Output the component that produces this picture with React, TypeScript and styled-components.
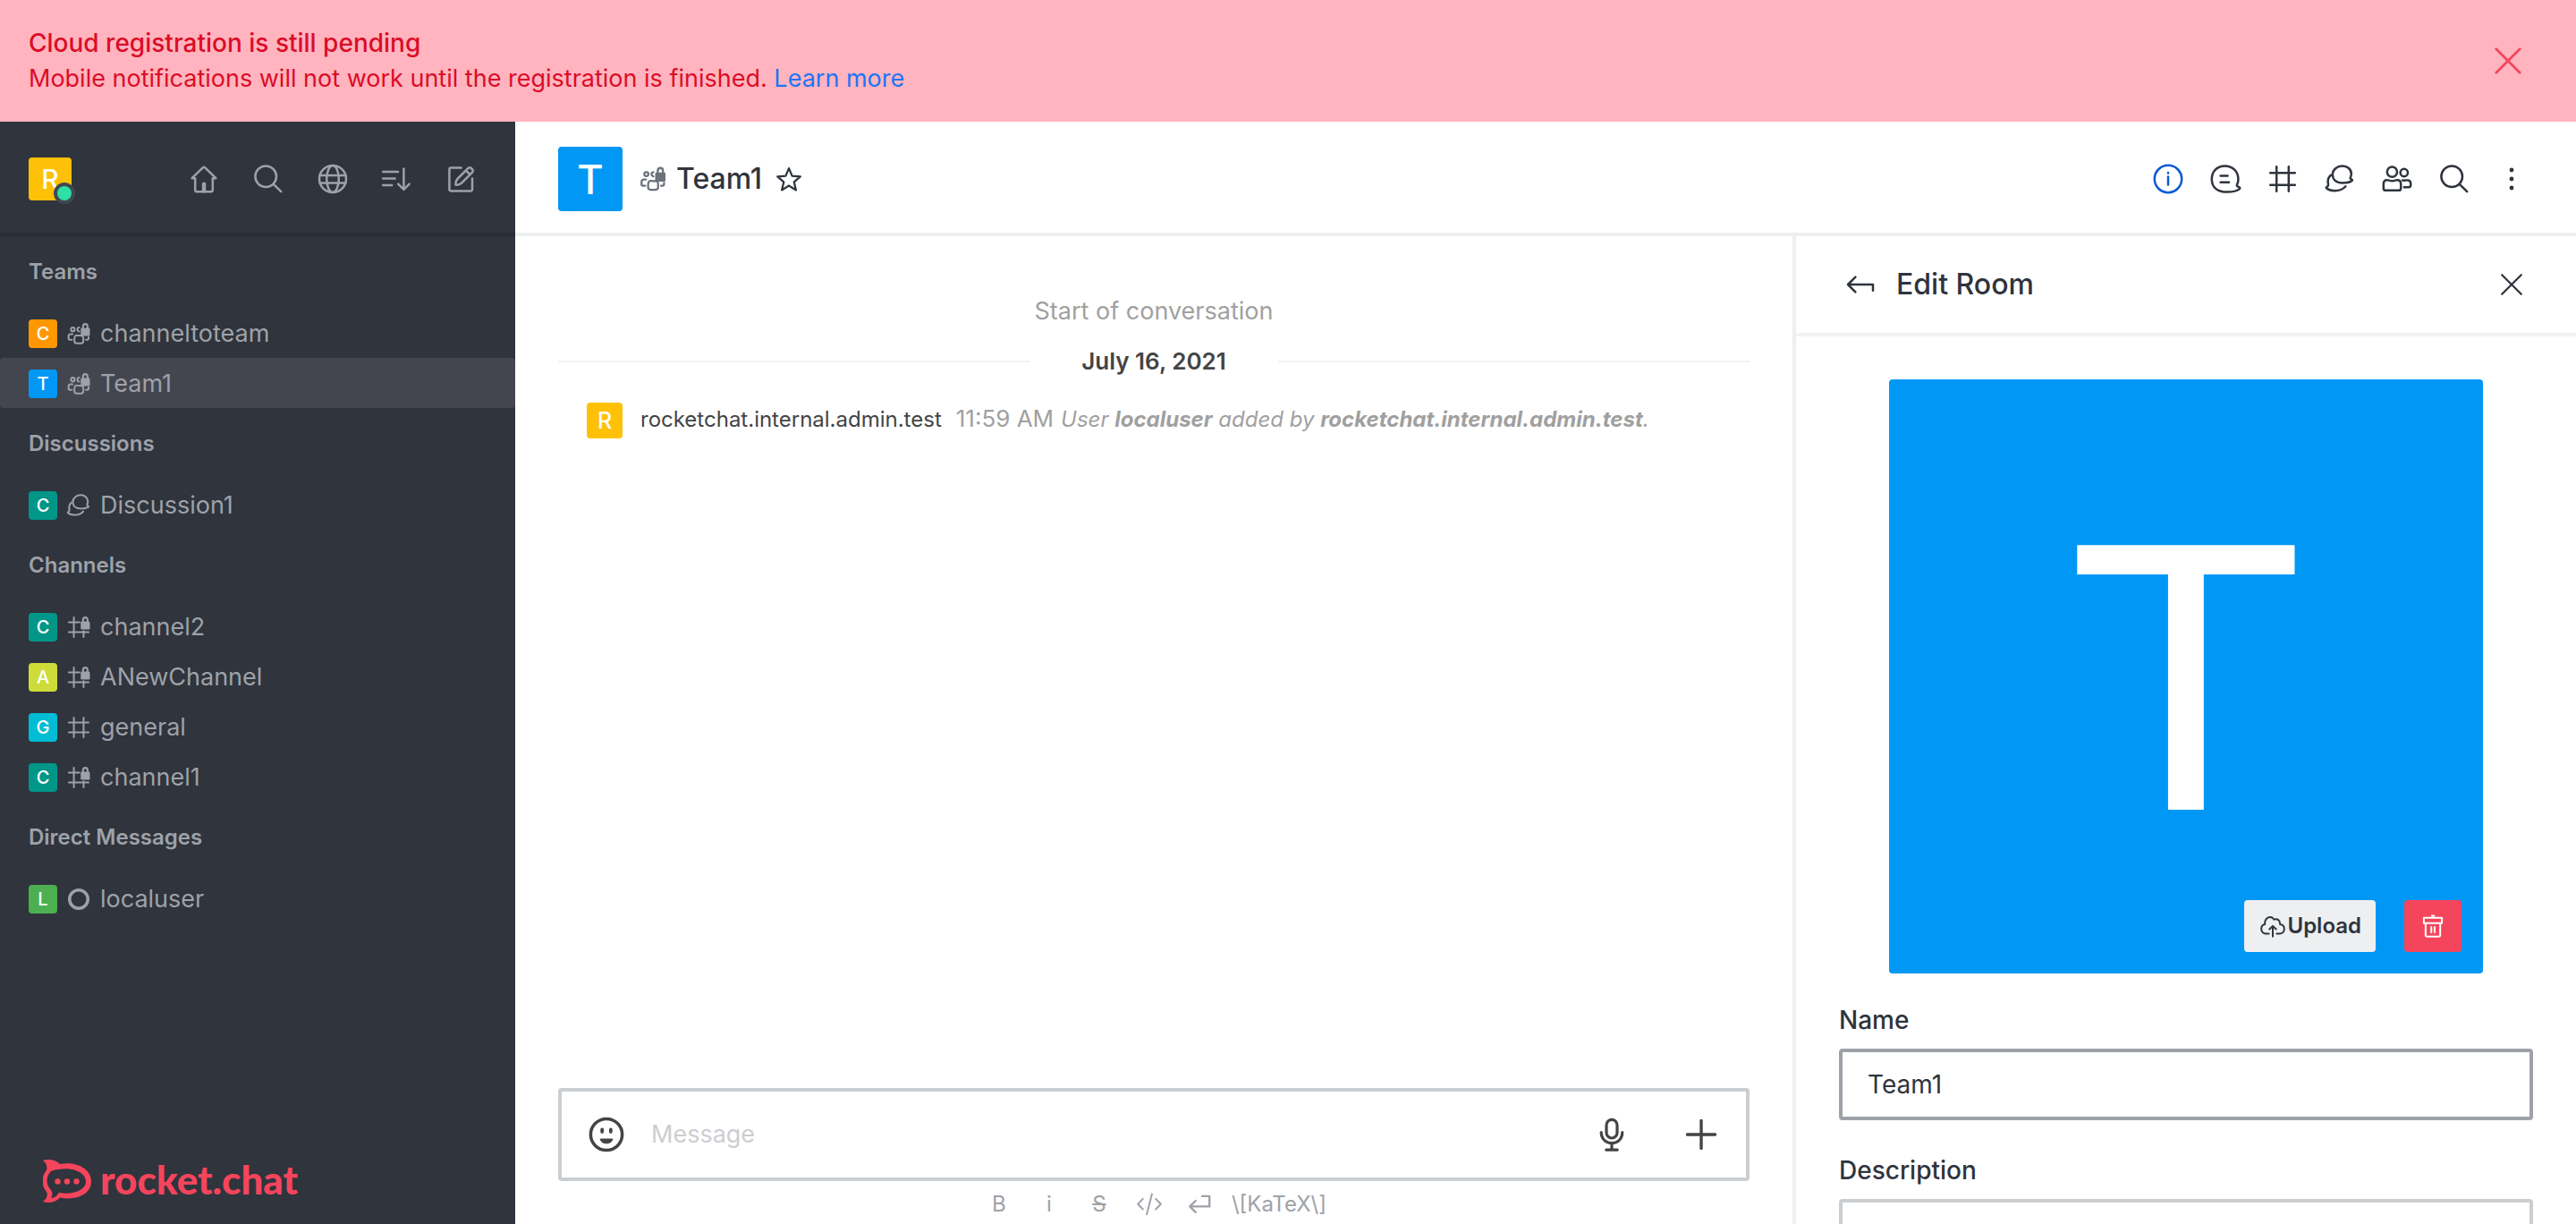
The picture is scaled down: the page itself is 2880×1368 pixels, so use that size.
import React from 'react';
import styled, { createGlobalStyle } from 'styled-components';

const Global = createGlobalStyle`
  * { box-sizing: border-box; }
  html, body, #root { height: 100%; margin: 0; }
  body {
    font-family: Inter, 'Liberation Sans', sans-serif;
    font-size: 27px;
    line-height: 40px;
    color: #2f343d;
    background: #fff;
    overflow: hidden;
  }
  button { border: 0; padding: 0; background: none; font: inherit; color: inherit; cursor: pointer; }
  h1, h2, h3, p, ul { margin: 0; padding: 0; font: inherit; list-style: none; }
`;

const Page = styled.div`
  height: 100vh;
  display: flex;
  flex-direction: column;
`;

const Banner = styled.div`
  display: flex;
  align-items: center;
  justify-content: space-between;
  padding: 28px 54px 28px 32px;
  background: #ffb4bf;
  color: #db0c27;
`;
const BannerTitle = styled.h2` && { font-size: 28px; font-weight: 500; } `;
const BannerLink = styled.a` color: #1d74f5; text-decoration: none; `;
const BannerClose = styled.button` display: flex; color: #f5455c; `;

const Body = styled.div` flex: 1; min-height: 0; display: flex; `;

const Sidebar = styled.nav`
  width: 576px;
  flex: none;
  display: flex;
  flex-direction: column;
  background: #2f343d;
  color: #9ea2a8;
`;
const SidebarTop = styled.div`
  display: flex;
  align-items: center;
  justify-content: space-between;
  height: 128px;
  padding: 4px 32px 0;
  border-bottom: 4px solid #292c36;
`;
const SidebarActions = styled.div` display: flex; gap: 16px; `;
const IconButton = styled.button<{ $size: number; $color?: string }>`
  display: flex;
  align-items: center;
  justify-content: center;
  width: ${p => p.$size}px;
  height: ${p => p.$size}px;
  color: ${p => p.$color || 'inherit'};
`;

const Avatar = styled.span<{ $size: number; $font: number; $bg: string }>`
  position: relative;
  flex: none;
  display: flex;
  align-items: center;
  justify-content: center;
  width: ${p => p.$size}px;
  height: ${p => p.$size}px;
  border-radius: 4px;
  background: ${p => p.$bg};
  color: #fff;
  font-size: ${p => p.$font}px;
  font-weight: 500;
  line-height: 1;
`;
const Presence = styled.span`
  position: absolute;
  right: -4px;
  bottom: -4px;
  width: 24px;
  height: 24px;
  border: 4px solid #414852;
  border-radius: 50%;
  background: #2de0a5;
`;

const GroupTitle = styled.h3`
  && {
    padding: 20px 32px;
    font-size: 24px;
    line-height: 40px;
    font-weight: 600;
  }
`;
const Rooms = styled.div` flex: 1; `;
const RoomLink = styled.a<{ $active?: boolean }>`
  display: flex;
  align-items: center;
  gap: 8px;
  height: 56px;
  padding: 2px 32px 0;
  border-radius: 4px;
  background: ${p => (p.$active ? '#43464f' : 'transparent')};
  color: inherit;
  text-decoration: none;
`;
const Logo = styled.div`
  display: flex;
  align-items: flex-start;
  gap: 10px;
  padding: 0 48px 24px;
  color: #f5455c;
  font: 900 44px/44px Lato, sans-serif;
`;

const Main = styled.main` flex: 1; min-width: 0; display: flex; flex-direction: column; `;
const RoomHeader = styled.header`
  display: flex;
  align-items: center;
  height: 128px;
  padding: 4px 48px 0;
  border-bottom: 4px solid #eeeff1;
`;
const RoomTitle = styled.h1`
  && {
    flex: 1;
    display: flex;
    align-items: center;
    gap: 8px;
    padding-left: 16px;
    font-size: 32px;
    font-weight: 500;
  }
`;
const RoomKind = styled.span` display: flex; color: #6c727a; `;
const Toolbar = styled.div` display: flex; gap: 16px; `;

const Columns = styled.div` flex: 1; min-height: 0; display: flex; `;
const Conversation = styled.section`
  flex: 1;
  min-width: 0;
  display: flex;
  flex-direction: column;
  padding: 64px 48px 0;
`;
const Start = styled.p` && { text-align: center; color: #a0a0a0; } `;
const DateDivider = styled.div`
  display: flex;
  align-items: center;
  gap: 58px;
  padding: 16px 0;
  font-size: 26px;
  font-weight: 600;
  color: #444;
  &::before, &::after { content: ''; flex: 1; height: 2px; background: #f2f3f5; }
`;
const Message = styled.article`
  flex: 1;
  display: flex;
  align-items: flex-start;
  padding: 10px 32px;
`;
const MessageText = styled.p`
  && { flex: 1; padding-left: 20px; font-size: 24px; line-height: 36px; color: #a0a0a0; }
`;
const Author = styled.span` color: #444; margin-right: 12px; `;
const Time = styled.time` margin: 0 8px 0 4px; font-size: 26px; `;

const Composer = styled.form`
  display: flex;
  align-items: center;
  height: 104px;
  padding: 0 28px;
  border: 4px solid #cbced1;
  border-radius: 4px;
  color: #444;
`;
const ComposerInput = styled.input`
  flex: 1;
  min-width: 0;
  padding: 0 28px;
  border: 0;
  outline: 0;
  font: inherit;
  color: inherit;
  &::placeholder { color: #cbced1; opacity: 1; }
`;
const ComposerActions = styled.div` display: flex; gap: 56px; `;
const Formatting = styled.div`
  display: flex;
  justify-content: center;
  align-items: center;
  height: 48px;
  padding: 4px 8px 0 0;
  color: #9ea2a8;
  font-size: 24px;
`;
const FormatButton = styled.button`
  display: flex;
  align-items: center;
  justify-content: center;
  width: 56px;
  height: 40px;
`;
const Katex = styled.span` padding-left: 8px; `;

const Panel = styled.aside`
  width: 876px;
  flex: none;
  border-left: 4px solid #eeeff1;
  overflow: hidden;
`;
const PanelHeader = styled.header`
  display: flex;
  align-items: center;
  gap: 16px;
  height: 112px;
  padding: 0 48px;
  border-bottom: 4px solid #f2f3f5;
`;
const PanelTitle = styled.h2` && { flex: 1; font-size: 32px; font-weight: 500; } `;
const PanelBody = styled.form` padding: 48px; `;
const RoomPicture = styled.div`
  display: grid;
  aspect-ratio: 1;
  margin: 0 56px 32px;
  border-radius: 4px;
  background: #0198f5;
`;
const PictureLetter = styled.span`
  grid-area: 1 / 1;
  place-self: center;
  color: #fff;
  font: 430px/1 'Liberation Sans', Arial, sans-serif;
`;
const PictureActions = styled.div`
  grid-area: 1 / 1;
  place-self: end;
  display: flex;
  gap: 32px;
  padding: 24px;
`;
const PictureButton = styled.button<{ $danger?: boolean }>`
  display: flex;
  align-items: center;
  justify-content: center;
  min-width: 64px;
  height: 58px;
  padding: 0 16px;
  border-radius: 4px;
  background: ${p => (p.$danger ? '#f5455c' : '#eeeff1')};
  color: ${p => (p.$danger ? '#fff' : '#2f343d')};
  font-size: 24px;
  font-weight: 600;
`;
const Field = styled.div`
  display: flex;
  flex-direction: column;
  gap: 12px;
  padding-bottom: 36px;
  font-size: 28px;
`;
const Label = styled.label` font-weight: 500; `;
const TextInput = styled.input`
  height: 80px;
  padding: 0 28px;
  border: 4px solid #9ea2a8;
  border-radius: 4px;
  font: inherit;
  color: inherit;
  outline: 0;
`;
const TextArea = styled.textarea`
  height: 160px;
  padding: 16px 28px;
  border: 4px solid #cbced1;
  border-radius: 4px;
  font: inherit;
  resize: none;
`;

/* Icons share a 20-unit grid and draw with the current text colour. */
const ICONS: Record<string, React.ReactNode> = {
  home: <><path d="M3.300 9.600 9.400 3.700q.6-.5 1.200 0l6.100 5.900h-1.800v6.600q0 .9-.9.900H6q-.9 0-.9-.9V9.600z" /><path d="M10 12.800v3.800" strokeWidth="2.200" /></>,
  search: <><circle cx="8.600" cy="8.600" r="5.900" /><path d="m12.900 12.900 4.200 4.200" /></>,
  globe: <><circle cx="10" cy="10" r="7.500" /><ellipse cx="10" cy="10" rx="3.400" ry="7.500" /><path d="M2.800 8h14.400M2.800 12.200h14.400" /></>,
  sort: <path d="M2.100 6h8.400M2.100 9.800h6.700M2.100 13.500h5M13.700 4.200v11.600M10.600 12.800l3.100 3.100 3.100-3.100" />,
  edit: <path d="M9.800 3.800H4.100q-.9 0-.9.900v11.100q0 .9.900.9h11q.9 0 .9-.9V9.800M6.700 13.300c-.1-1.600.2-2.500 1-3.300l5.900-5.900c.6-.6 1.300-.6 1.900 0l.4.400c.6.6.6 1.300 0 1.900L10 12.300c-.8.8-1.700 1.100-3.300 1zM12.500 5.300l2.200 2.200" />,
  cross: <path d="m4 4 12 12M16 4 4 16" />,
  info: <><circle cx="10" cy="10" r="7.600" /><path d="M10 8.800v4.400M10 6.500v.3" /></>,
  thread: <path d="M11 17.300c3.600 0 5.700-.7 6.800-1.600.5-.4.4-.9-.1-1.100-1.100-.5-1.600-.8-1.100-1.600.5-.9.600-1.700.6-2.900C17.200 5.900 14.100 2.700 9.700 2.700S2.400 5.900 2.400 10.100c0 4.700 3.400 7.200 8.600 7.200zM7.300 8.200h4M7.300 11.900h4.700" />,
  hash: <path d="M6.600 3.100v13.800M13.400 3.100v13.800M3.100 6.600h13.800M3.100 13.400h13.800" />,
  hashLock: <><path d="M6.600 3.100v13.800M13.400 12.600v4.300M3.100 6.600h7.400M3.100 13.400h13.800" /><Lock /></>,
  discussion: <path d="M11.600 12.200c2.300 0 3.800-.3 4.900-1 .6-.4.500-.8 0-1-.7-.3-.8-.6-.5-1.200.3-.7.4-1 .4-1.900 0-2.400-2.100-4.400-5-4.400S5.900 4.800 5.900 7.500c0 3 2.300 4.700 5.700 4.700zM4.800 7.900C3.400 9.400 3 11.200 3.500 13c.2.700 0 .9-.6 1.300-.7.300-.7.800-.1 1.100.9.700 2.300 1.200 4.200 1.200 2.900 0 4.800-.8 6.200-2.500" />,
  members: <><circle cx="7.200" cy="6.100" r="2.800" /><circle cx="13.900" cy="6.500" r="2.100" /><path d="M4.300 10.600c1 0 1.600.5 2.900.5s1.900-.5 2.900-.5c1.200 0 2 .9 2 2.300v2.300c0 .8-.4 1.200-1.200 1.200H3.600c-.8 0-1.200-.4-1.200-1.200v-2.300c0-1.400.7-2.300 1.900-2.300zM13 10.800c1 .2 2.200-.2 3.100-.1.900.1 1.500.8 1.500 1.800v.9c0 .8-.4 1.200-1.100 1.200h-2.600" /></>,
  team: <><circle cx="5.900" cy="7" r="1.300" /><path d="M10.300 5.700c-1.400 0-1.700 2.300 0 2.700M5.700 10.300H4.400c-1 0-1.500.6-1.500 1.500v1.500c0 .6.400.9 1 .9h1.300M7.700 11.400c.6-.5 1.300-.1 2.500-.1 1.100 0 1.900-.1 2.600.3.300.4.400 1.100.4 2v1.600c0 1-.5 1.500-1.500 1.500H8.500c-1 0-1.500-.5-1.500-1.500v-1.700c0-.9.100-1.600.7-2.100zM15 14.200h.9c.7 0 1-.4 1-1.200v-.6" /><Lock /></>,
  star: <path d="m10 3.400 2 4.700 5.100.4-3.900 3.400 1.200 5-4.400-2.700-4.400 2.700 1.200-5-3.900-3.400 5.100-.4z" />,
  back: <path d="M7.200 5.800 3 10l4.200 4.200M3 10h14v3.400" />,
  emoji: <><circle cx="10" cy="10" r="8" strokeWidth="1.600" /><path d="M7.800 7.400v1.200M12.200 7.400v1.200" strokeWidth="1.700" /><path d="M7.200 12.500c1 2.200 4.600 2.200 5.600 0z" fill="currentColor" strokeWidth="1" /></>,
  mic: <g strokeWidth="1.600"><rect x="7" y="1.700" width="6" height="10.300" rx="3" /><path d="M4.100 8.800c0 8 11.800 8 11.800 0M10 14.800v3.500M6.900 18.600h6.200" /></g>,
  plus: <path d="M10 2.200v15.600M2.200 10h15.600" strokeWidth="1.700" />,
  code: <path d="M5.500 6.200 2 9.800l3.500 3.600M14.500 6.200 18 9.800l-3.500 3.600M11.800 2.800 8.200 17" />,
  enter: <path d="M12 4.300h5v7.200H3.500M7.300 7.500l-4 4 4 4" strokeWidth="1.500" />,
  upload: <path d="M7.300 15.300H5.400c-2 0-3.400-1.500-3.400-3.300 0-1.600 1-2.900 2.500-3.200C4.200 6 5.800 3.800 8 3.800c1.300 0 2.300.6 2.900 1.600 2.200-.9 4.300.6 4.200 3.300 1.700.2 2.900 1.600 2.900 3.300 0 1.900-1.400 3.300-3.200 3.300h-2.100M10 17.400v-7.300M7.700 12.200 10 9.900l2.300 2.300" />,
  trash: <path d="M3.700 4.200h12.600v3.700H3.700zM4.900 7.900V16.400q0 .9.900.9h8.400q.9 0 .9-.9V7.900M9.200 2.800h1.600M8.900 10.700v3.600M11.200 10.700v3.600" />,
};

function Lock() {
  return (
    <>
      <path d="M13 7V5c0-2.400 3.200-2.400 3.200 0v2" strokeWidth="1.300" />
      <rect x="11.400" y="6" width="6.400" height="5.600" rx=".8" fill="currentColor" stroke="none" />
    </>
  );
}

function Icon({ name, size = 40 }: { name: string; size?: number }) {
  return (
    <svg width={size} height={size} viewBox="0 0 20 20" fill="none" stroke="currentColor" strokeWidth="1.250" strokeLinecap="round" strokeLinejoin="round" aria-hidden="true">
      {name === 'kebab' && [5, 10, 15].map(y => <circle key={y} cx="10" cy={y} r="1.200" fill="currentColor" stroke="none" />)}
      {name === 'offline' && <circle cx="10" cy="10" r="6.400" strokeWidth="2.200" />}
      {ICONS[name]}
    </svg>
  );
}

const groups = [
  { title: 'Teams', rooms: [['C', '#ff9800', 'team', 'channeltoteam'], ['T', '#0198f5', 'team', 'Team1']] },
  { title: 'Discussions', rooms: [['C', '#009688', 'discussion', 'Discussion1']] },
  {
    title: 'Channels',
    rooms: [
      ['C', '#009688', 'hashLock', 'channel2'],
      ['A', '#cddc39', 'hashLock', 'ANewChannel'],
      ['G', '#00bcd4', 'hash', 'general'],
      ['C', '#009688', 'hashLock', 'channel1'],
    ],
  },
  { title: 'Direct Messages', rooms: [['L', '#4caf50', 'offline', 'localuser']] },
];

const navActions = [['home', 'Home'], ['search', 'Search'], ['globe', 'Directory'], ['sort', 'Sort'], ['edit', 'Create new']];
const roomActions = [
  ['info', 'Team info'], ['thread', 'Threads'], ['hash', 'Team channels'], ['discussion', 'Discussions'],
  ['members', 'Members'], ['search', 'Search messages'], ['kebab', 'More'],
];

export default function App() {
  return (
    <Page>
      <Global />
      <Banner>
        <div>
          <BannerTitle>Cloud registration is still pending</BannerTitle>
          <p>Mobile notifications will not work until the registration is finished. <BannerLink href="#">Learn more</BannerLink></p>
        </div>
        <BannerClose aria-label="Close"><Icon name="cross" size={44} /></BannerClose>
      </Banner>
      <Body>
        <Sidebar>
          <SidebarTop>
            <Avatar $size={48} $font={30} $bg="#ffc107">R<Presence /></Avatar>
            <SidebarActions>
              {navActions.map(([icon, label]) => (
                <IconButton key={icon} $size={56} aria-label={label}><Icon name={icon} /></IconButton>
              ))}
            </SidebarActions>
          </SidebarTop>
          <Rooms>
            {groups.map(g => (
              <section key={g.title}>
                <GroupTitle>{g.title}</GroupTitle>
                <ul>
                  {g.rooms.map(([letter, bg, icon, name]) => (
                    <li key={name}>
                      <RoomLink href="#" $active={name === 'Team1'}>
                        <Avatar $size={32} $font={20} $bg={bg}>{letter}</Avatar>
                        <Icon name={icon} size={32} />
                        {name}
                      </RoomLink>
                    </li>
                  ))}
                </ul>
              </section>
            ))}
          </Rooms>
          <Logo>
            <svg width="54" height="48" viewBox="0 0 54 48" aria-hidden="true">
              <path fill="currentColor" fillRule="evenodd" d="M0 1C6-1 14 0 19 5c18-3 35 5 35 19.500S37 46 19 42.500C14 48 6 49 0 47c4-3 6-7 4-11-6-7-6-17 0-24C5 8 4 4 0 1zM9 13c-6 6-6 15 0 21 2 3 2 6 0 9 4 0 7-3 9-6 15 3 30-3 30-12.500S34 8 18 11c-4 0-7 1-9 2z" />
              <circle cx="16.500" cy="24.500" r="3.200" fill="currentColor" /><circle cx="27" cy="24.500" r="3.200" fill="currentColor" /><circle cx="37.500" cy="24.500" r="3.200" fill="currentColor" />
            </svg>
            rocket.chat
          </Logo>
        </Sidebar>
        <Main>
          <RoomHeader>
            <Avatar $size={72} $font={45} $bg="#0198f5">T</Avatar>
            <RoomTitle>
              <RoomKind><Icon name="team" size={36} /></RoomKind>
              Team1
              <IconButton $size={44} aria-label="Favorite"><Icon name="star" size={36} /></IconButton>
            </RoomTitle>
            <Toolbar>
              {roomActions.map(([icon, label]) => (
                <IconButton key={icon} $size={48} $color={icon === 'info' ? '#095ad2' : undefined} aria-label={label}><Icon name={icon} /></IconButton>
              ))}
            </Toolbar>
          </RoomHeader>
          <Columns>
            <Conversation>
              <Start>Start of conversation</Start>
              <DateDivider>July 16, 2021</DateDivider>
              <Message>
                <Avatar $size={40} $font={25} $bg="#ffc107">R</Avatar>
                <MessageText>
                  <Author>rocketchat.internal.admin.test</Author>
                  <Time>11:59 AM</Time>
                  <em>User <b>localuser</b> added by <b>rocketchat.internal.admin.test</b>.</em>
                </MessageText>
              </Message>
              <Composer>
                <IconButton type="button" $size={44} aria-label="Emoji"><Icon name="emoji" size={44} /></IconButton>
                <ComposerInput aria-label="Message" placeholder="Message" />
                <ComposerActions>
                  <IconButton type="button" $size={44} aria-label="Record audio"><Icon name="mic" /></IconButton>
                  <IconButton type="button" $size={44} aria-label="Add"><Icon name="plus" /></IconButton>
                </ComposerActions>
              </Composer>
              <Formatting>
                <FormatButton aria-label="Bold">B</FormatButton>
                <FormatButton aria-label="Italic">i</FormatButton>
                <FormatButton aria-label="Strike"><s>S</s></FormatButton>
                <FormatButton aria-label="Code"><Icon name="code" size={32} /></FormatButton>
                <FormatButton aria-label="Multi line"><Icon name="enter" size={32} /></FormatButton>
                <Katex>\[KaTeX\]</Katex>
              </Formatting>
            </Conversation>
            <Panel>
              <PanelHeader>
                <IconButton $size={48} aria-label="Back"><Icon name="back" /></IconButton>
                <PanelTitle>Edit Room</PanelTitle>
                <IconButton $size={48} aria-label="Close"><Icon name="cross" size={36} /></IconButton>
              </PanelHeader>
              <PanelBody>
                <RoomPicture>
                  <PictureLetter>T</PictureLetter>
                  <PictureActions>
                    <PictureButton type="button"><Icon name="upload" size={32} />Upload</PictureButton>
                    <PictureButton type="button" $danger aria-label="Delete"><Icon name="trash" size={32} /></PictureButton>
                  </PictureActions>
                </RoomPicture>
                <Field>
                  <Label htmlFor="room-name">Name</Label>
                  <TextInput id="room-name" defaultValue="Team1" />
                </Field>
                <Field>
                  <Label htmlFor="room-description">Description</Label>
                  <TextArea id="room-description" />
                </Field>
              </PanelBody>
            </Panel>
          </Columns>
        </Main>
      </Body>
    </Page>
  );
}
